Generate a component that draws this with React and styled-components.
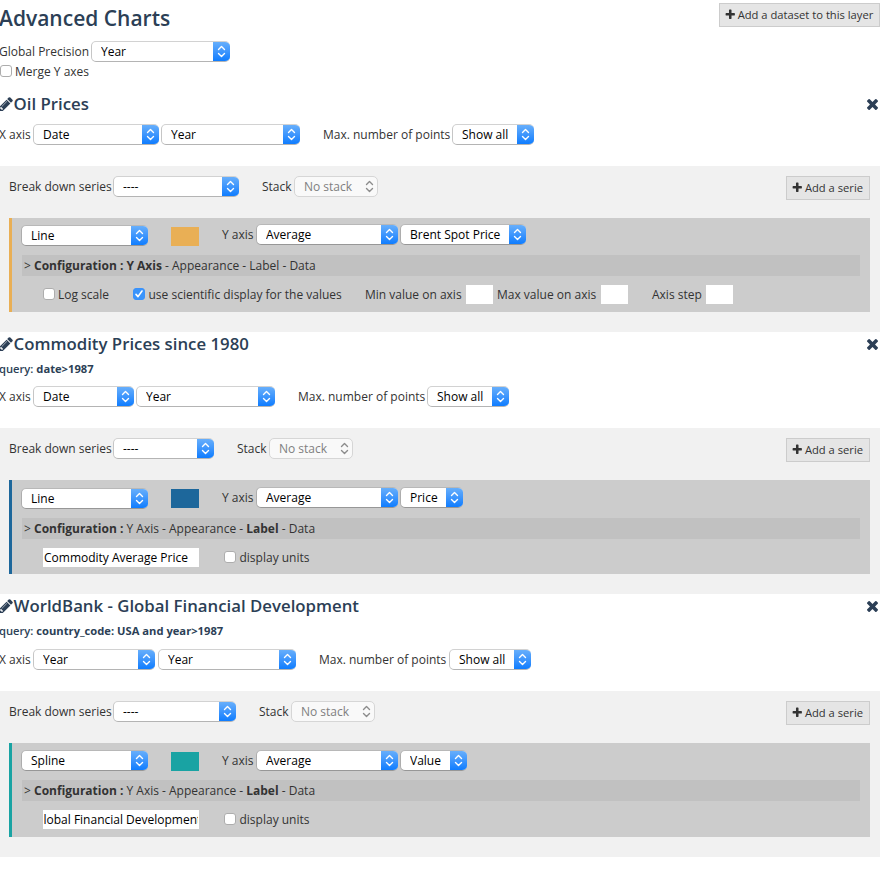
import React, { useLayoutEffect, useRef } from 'react';
import styled, { createGlobalStyle, css } from 'styled-components';

const GlobalStyle = createGlobalStyle`
  * { box-sizing: border-box; }
  body {
    margin: 0;
    background: #fff;
    color: #333;
    font: 12px/17px "Open Sans", "Noto Sans", sans-serif;
    overflow: hidden;
  }
`;

const Page = styled.main`
  width: 880px;
  height: 869px;
`;

const TopBar = styled.header`
  display: flex;
  justify-content: space-between;
  align-items: flex-start;
  height: 41px;
  padding-top: 3px;
`;

const PageTitle = styled.h1`
  margin: 0 0 0 -1px;
  color: #2c3f56;
  font-size: 21px;
  font-weight: 600;
  line-height: 30px;
  white-space: nowrap;
`;

const Button = styled.button`
  display: flex;
  align-items: center;
  justify-content: center;
  gap: 2.5px;
  width: ${(p) => p.$width}px;
  height: 24px;
  margin: 0 0 0 auto;
  padding: 0 1px 1px 0;
  border: 1px solid #ccc;
  background: #e5e5e5;
  color: #333;
  font: inherit;
  font-size: 11.2px;
  line-height: 16px;
  white-space: nowrap;
`;

const Glyph = styled.svg`
  display: block;
  flex: none;
  width: ${(p) => p.$size}px;
  height: ${(p) => p.$size}px;
  fill: currentColor;
`;

const Row = styled.div`
  display: flex;
  align-items: center;
  height: 21px;
`;

const Label = styled.label`
  flex: none;
  width: ${(p) => p.$width}px;
  margin-left: ${(p) => p.$gap || 0}px;
  white-space: nowrap;
`;

const SelectFrame = styled.span`
  display: flex;
  flex: none;
  width: ${(p) => p.$width}px;
  height: 21px;
  margin-left: ${(p) => p.$gap || 0}px;
  overflow: hidden;
  border: 1px solid;
  border-color: ${(p) => (p.$onDark ? '#b8b8b8 #adadad #979797' : '#d2d2d2 #c6c6c6 #b4b4b4')};
  border-right: 0;
  border-radius: 5px;
  background: #fff;
  ${(p) => p.$off && css`
    border: 1px solid #d6d6d6;
    background: #f9f9f9;
  `}
`;

const NativeSelect = styled.select`
  flex: 1;
  min-width: 0;
  padding: 0 0 0 9px;
  border: 0;
  appearance: none;
  background: transparent;
  color: #000;
  font: inherit;
  opacity: 1;
  &:disabled { color: #808080; }
`;

const Stepper = styled.span`
  display: flex;
  flex: none;
  align-items: center;
  justify-content: center;
  width: ${(p) => (p.$off ? 15 : 17)}px;
  height: 21px;
  margin-top: -1px;
  color: ${(p) => (p.$off ? '#8c8c8c' : '#fff')};
  background: ${(p) => (p.$off ? 'none' : 'linear-gradient(#6bb1fb, #3e96fd 50%, #0a7aff)')};
`;

const Chevrons = styled.svg`
  width: 9px;
  height: 13px;
  fill: none;
  stroke: currentColor;
  stroke-width: 1.4;
  stroke-linecap: round;
  stroke-linejoin: round;
`;

const Check = styled.span`
  display: flex;
  flex: none;
  width: 12px;
  height: 12px;
  margin: 0 0 1px ${(p) => p.$gap || 0}px;
  border: 1px solid ${(p) => (p.$on ? '#3a92fb' : '#adadad')};
  border-radius: 3px;
  background: ${(p) => (p.$on ? '#3a94fb' : '#fff')};
`;

const CheckMark = styled.svg`
  width: 10px;
  height: 10px;
  fill: none;
  stroke: #fff;
  stroke-width: 1.6;
  stroke-linecap: round;
  stroke-linejoin: round;
`;

const Dataset = styled.section`
  color: #333;
`;

const DatasetHead = styled.div`
  height: ${(p) => p.$height}px;
`;

const TitleRow = styled.div`
  display: flex;
  align-items: center;
  height: 24px;
  padding-right: 2px;
  margin-left: -1px;
  color: #2c3f56;
`;

const DatasetTitle = styled.h2`
  margin: 0 auto 0 0.6px;
  font-size: 16.8px;
  font-weight: 600;
  line-height: 24px;
  white-space: nowrap;
`;

const Query = styled.p`
  margin: 4px 0 0 -1px;
  color: #2c3f56;
  font-size: 11.2px;
  font-weight: 600;
  line-height: 18px;
  & b { font-weight: 700; }
`;

const AxisRow = styled(Row)`
  margin-top: ${(p) => p.$top}px;
`;

const Panel = styled.div`
  height: 166px;
  padding: 10px 10px 0 9px;
  background: #f1f1f1;
`;

const PanelTools = styled.div`
  display: flex;
  align-items: flex-start;
  height: 42px;
`;

const Series = styled.div`
  height: 94px;
  padding: ${(p) => 6 + p.$nudge}px 10px 0 9px;
  border-left: 3px solid ${(p) => p.$color};
  background: #ccc;
`;

const SeriesRow = styled.div`
  display: flex;
  align-items: flex-start;
  height: 31px;
`;

const KindSlot = styled.div`
  padding-top: 1px;
`;

const AxisSlot = styled(Row)`
  margin-top: ${(p) => p.$drop}px;
`;

const Swatch = styled.span`
  width: 28px;
  height: 19px;
  margin: ${(p) => 3 - p.$nudge}px 0 0 23px;
  background: ${(p) => p.$color};
`;

const Tabs = styled.nav`
  height: 21px;
  margin-left: 1px;
  padding-left: 2px;
  background: #c1c1c1;
  line-height: 21px;
  white-space: pre;
`;

const Options = styled(Row)`
  height: 19px;
  margin-top: 9px;
  padding-left: 22px;
`;

const Field = styled.input`
  flex: none;
  width: ${(p) => p.$width}px;
  height: 19px;
  padding: 0 1px;
  border: 0;
  background: #fff;
  color: #000;
  font: inherit;
`;

const PATHS = {
  plus: 'M1600 736v192q0 40-28 68t-68 28h-416v416q0 40-28 68t-68 28h-192q-40 0-68-28t-28-68v-416h-416q-40 0-68-28t-28-68v-192q0-40 28-68t68-28h416v-416q0-40 28-68t68-28h192q40 0 68 28t28 68v416h416q40 0 68 28t28 68z',
  times: 'M1490 1322q0 40-28 68l-136 136q-28 28-68 28t-68-28l-294-294-294 294q-28 28-68 28t-68-28l-136-136q-28-28-28-68t28-68l294-294-294-294q-28-28-28-68t28-68l136-136q28-28 68-28t68 28l294 294 294-294q28-28 68-28t68 28l136 136q28 28 28 68t-28 68l-294 294 294 294q28 28 28 68z',
  pencil: 'M491 1536l91-91-235-235-91 91v107h128v128h107zm523-928q0-22-22-22-10 0-17 7l-542 542q-7 7-7 17 0 22 22 22 10 0 17-7l542-542q7-7 7-17zm-54-192l416 416-832 832h-416v-416zm683 96q0 53-37 90l-166 166-416-416 166-165q36-38 90-38 53 0 91 38l235 234q37 39 37 91z',
};

const BOXES = {
  plus: '100 36 1592 1592',
  times: '302 366 1188 1188',
  pencil: '128 128 1536 1536',
};

function Icon({ name, size }) {
  return (
    <Glyph viewBox={BOXES[name]} $size={size} aria-hidden="true">
      <path d={PATHS[name]} />
    </Glyph>
  );
}

function Select({ value, width, gap, off, onDark }) {
  return (
    <SelectFrame $width={width} $gap={gap} $off={off} $onDark={onDark}>
      <NativeSelect defaultValue={value} disabled={off}>
        <option>{value}</option>
      </NativeSelect>
      <Stepper $off={off}>
        <Chevrons viewBox="0 0 9 13">
          <path d="M1.5 4.5l3-3 3 3M1.5 8.5l3 3 3-3" />
        </Chevrons>
      </Stepper>
    </SelectFrame>
  );
}

function Checkbox({ on, gap }) {
  return (
    <Check $on={on} $gap={gap} role="checkbox" aria-checked={!!on}>
      {on && (
        <CheckMark viewBox="0 0 10 10">
          <path d="M2 5.4l2 2.2 4-5.6" />
        </CheckMark>
      )}
    </Check>
  );
}

function LabelField({ value, scroll }) {
  const ref = useRef(null);
  useLayoutEffect(() => {
    const apply = () => { if (ref.current) ref.current.scrollLeft = scroll; };
    apply();
    document.fonts.ready.then(apply);
  }, [scroll]);
  return <Field ref={ref} $width={156} defaultValue={value} />;
}

const TABS = ['Y Axis', 'Appearance', 'Label', 'Data'];

function ConfigTabs({ active }) {
  return (
    <Tabs>
      {'> '}
      <b>Configuration : </b>
      {TABS.map((tab, i) => (
        <React.Fragment key={tab}>
          {i > 0 && ' - '}
          {tab === active ? <b>{tab}</b> : <span>{tab}</span>}
        </React.Fragment>
      ))}
    </Tabs>
  );
}

function AxisOptions() {
  return (
    <Options>
      <Checkbox />
      <Label $width={75} $gap={3}>Log scale</Label>
      <Checkbox on />
      <Label $width={216.5} $gap={3.5}>use scientific display for the values</Label>
      <Label $width={101}>Min value on axis</Label>
      <Field $width={27} />
      <Label $width={104} $gap={4}>Max value on axis</Label>
      <Field $width={27} />
      <Label $width={54} $gap={24}>Axis step</Label>
      <Field $width={27} />
    </Options>
  );
}

function LabelOptions({ label, scroll }) {
  return (
    <Options>
      <LabelField value={label} scroll={scroll} />
      <Checkbox gap={25} />
      <Label $width={80} $gap={3.5}>display units</Label>
    </Options>
  );
}

const DATASETS = [
  {
    title: 'Oil Prices', headHeight: 74, rowTop: 8,
    x: 'Date', xWidth: 126, periodGap: 2, periodWidth: 139, pointsWidth: 129, breakWidth: 126,
    kind: 'Line', color: '#e9af55', field: 'Brent Spot Price', fieldWidth: 126,
    nudge: 0, drop: 0, tab: 'Y Axis',
  },
  {
    title: 'Commodity Prices since 1980', query: 'date>1987', headHeight: 96, rowTop: 8,
    x: 'Date', xWidth: 101, periodGap: 2, periodWidth: 139, pointsWidth: 129, breakWidth: 101,
    kind: 'Line', color: '#1d679b', field: 'Price', fieldWidth: 63,
    nudge: 1, drop: 0, tab: 'Label', label: 'Commodity Average Price', scroll: 0,
  },
  {
    title: 'WorldBank - Global Financial Development', query: 'country_code: USA and year>1987',
    headHeight: 97, rowTop: 9,
    x: 'Year', xWidth: 122, periodGap: 3, periodWidth: 138, pointsWidth: 130, breakWidth: 123,
    kind: 'Spline', color: '#19a3a3', field: 'Value', fieldWidth: 67,
    nudge: 0, drop: 1, tab: 'Label', label: 'WorldBank - Global Financial Development', scroll: 81,
  },
];

function DatasetEditor({ data }) {
  return (
    <Dataset>
      <DatasetHead $height={data.headHeight}>
        <TitleRow>
          <Icon name="pencil" size={14} />
          <DatasetTitle>{data.title}</DatasetTitle>
          <Icon name="times" size={11} />
        </TitleRow>
        {data.query && <Query>query: <b>{data.query}</b></Query>}
        <AxisRow $top={data.rowTop}>
          <Label $width={34} $gap={-1}>X axis</Label>
          <Select value={data.x} width={data.xWidth} />
          <Select value="Year" width={data.periodWidth} gap={data.periodGap} />
          <Label $width={data.pointsWidth} $gap={23}>Max. number of points</Label>
          <Select value="Show all" width={82} />
        </AxisRow>
      </DatasetHead>
      <Panel>
        <PanelTools>
          <Row>
            <Label $width={104}>Break down series</Label>
            <Select value="----" width={data.breakWidth} />
            <Label $width={32} $gap={23}>Stack</Label>
            <Select value="No stack" width={84} off />
          </Row>
          <Button $width={84}><Icon name="plus" size={10.5} />Add a serie</Button>
        </PanelTools>
        <Series $color={data.color} $nudge={data.nudge}>
          <SeriesRow>
            <KindSlot><Select value={data.kind} width={127} onDark /></KindSlot>
            <Swatch $color={data.color} $nudge={data.nudge} />
            <AxisSlot $drop={data.drop}>
              <Label $width={34} $gap={23}>Y axis</Label>
              <Select value="Average" width={142} onDark />
              <Select value={data.field} width={data.fieldWidth} gap={2} onDark />
            </AxisSlot>
          </SeriesRow>
          <ConfigTabs active={data.tab} />
          {data.label ? <LabelOptions label={data.label} scroll={data.scroll} /> : <AxisOptions />}
        </Series>
      </Panel>
    </Dataset>
  );
}

const MergeRow = styled(Row)`
  height: 30px;
  padding-bottom: 11px;
`;

export default function App() {
  return (
    <Page>
      <GlobalStyle />
      <TopBar>
        <PageTitle>Advanced Charts</PageTitle>
        <Button $width={161}><Icon name="plus" size={10.5} />Add a dataset to this layer</Button>
      </TopBar>
      <Row>
        <Label $width={92} $gap={-1}>Global Precision</Label>
        <Select value="Year" width={139} />
      </Row>
      <MergeRow>
        <Checkbox />
        <Label $width={80} $gap={3}>Merge Y axes</Label>
      </MergeRow>
      {DATASETS.map((d) => <DatasetEditor key={d.title} data={d} />)}
    </Page>
  );
}
